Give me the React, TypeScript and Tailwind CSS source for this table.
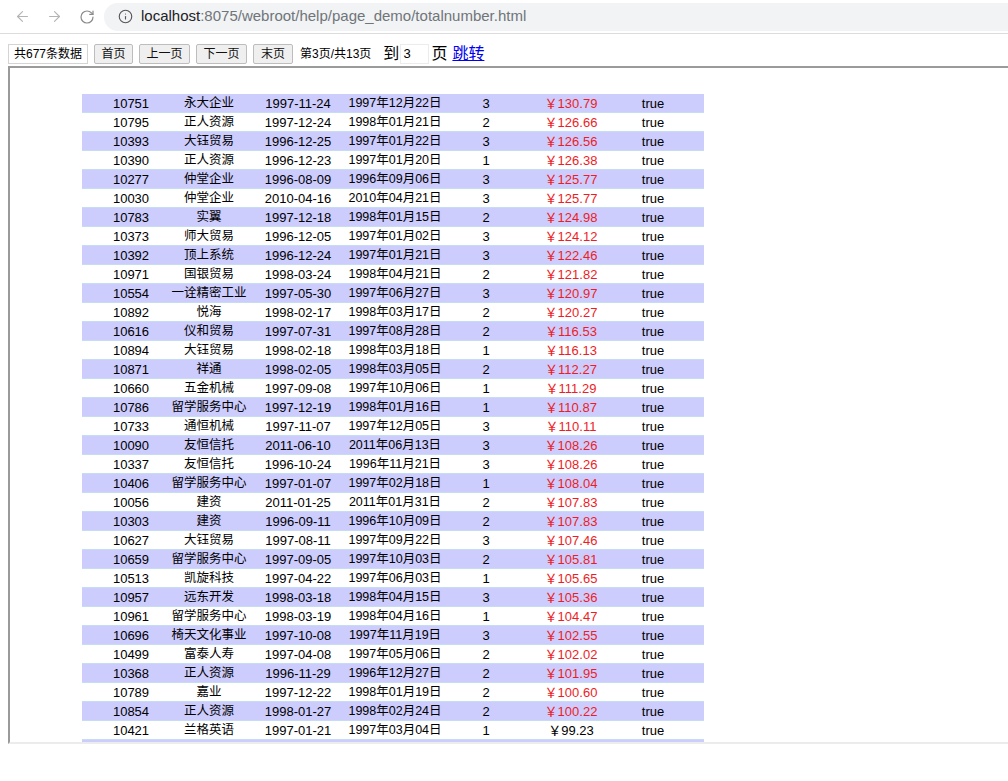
import React from 'react';
import { ArrowLeft, ArrowRight, RotateCw, Info } from 'lucide-react';

type Row = [string, string, string, string, string, string];

const rows: Row[] = [
  ['10751', '永大企业', '1997-11-24', '1997年12月22日', '3', '130.79'],
  ['10795', '正人资源', '1997-12-24', '1998年01月21日', '2', '126.66'],
  ['10393', '大钰贸易', '1996-12-25', '1997年01月22日', '3', '126.56'],
  ['10390', '正人资源', '1996-12-23', '1997年01月20日', '1', '126.38'],
  ['10277', '仲堂企业', '1996-08-09', '1996年09月06日', '3', '125.77'],
  ['10030', '仲堂企业', '2010-04-16', '2010年04月21日', '3', '125.77'],
  ['10783', '实翼', '1997-12-18', '1998年01月15日', '2', '124.98'],
  ['10373', '师大贸易', '1996-12-05', '1997年01月02日', '3', '124.12'],
  ['10392', '顶上系统', '1996-12-24', '1997年01月21日', '3', '122.46'],
  ['10971', '国银贸易', '1998-03-24', '1998年04月21日', '2', '121.82'],
  ['10554', '一诠精密工业', '1997-05-30', '1997年06月27日', '3', '120.97'],
  ['10892', '悦海', '1998-02-17', '1998年03月17日', '2', '120.27'],
  ['10616', '仪和贸易', '1997-07-31', '1997年08月28日', '2', '116.53'],
  ['10894', '大钰贸易', '1998-02-18', '1998年03月18日', '1', '116.13'],
  ['10871', '祥通', '1998-02-05', '1998年03月05日', '2', '112.27'],
  ['10660', '五金机械', '1997-09-08', '1997年10月06日', '1', '111.29'],
  ['10786', '留学服务中心', '1997-12-19', '1998年01月16日', '1', '110.87'],
  ['10733', '通恒机械', '1997-11-07', '1997年12月05日', '3', '110.11'],
  ['10090', '友恒信托', '2011-06-10', '2011年06月13日', '3', '108.26'],
  ['10337', '友恒信托', '1996-10-24', '1996年11月21日', '3', '108.26'],
  ['10406', '留学服务中心', '1997-01-07', '1997年02月18日', '1', '108.04'],
  ['10056', '建资', '2011-01-25', '2011年01月31日', '2', '107.83'],
  ['10303', '建资', '1996-09-11', '1996年10月09日', '2', '107.83'],
  ['10627', '大钰贸易', '1997-08-11', '1997年09月22日', '3', '107.46'],
  ['10659', '留学服务中心', '1997-09-05', '1997年10月03日', '2', '105.81'],
  ['10513', '凯旋科技', '1997-04-22', '1997年06月03日', '1', '105.65'],
  ['10957', '远东开发', '1998-03-18', '1998年04月15日', '3', '105.36'],
  ['10961', '留学服务中心', '1998-03-19', '1998年04月16日', '1', '104.47'],
  ['10696', '椅天文化事业', '1997-10-08', '1997年11月19日', '3', '102.55'],
  ['10499', '富泰人寿', '1997-04-08', '1997年05月06日', '2', '102.02'],
  ['10368', '正人资源', '1996-11-29', '1996年12月27日', '2', '101.95'],
  ['10789', '嘉业', '1997-12-22', '1998年01月19日', '2', '100.60'],
  ['10854', '正人资源', '1998-01-27', '1998年02月24日', '2', '100.22'],
  ['10421', '兰格英语', '1997-01-21', '1997年03月04日', '1', '99.23'],
  ['', '', '', '', '', ''],
];

const font = { fontFamily: '"Liberation Sans", "Noto Sans CJK SC", sans-serif' };

const ToolButton: React.FC<{ label: string; w: string }> = ({ label, w }) => (
  <button className={`h-[20px] ${w} bg-[#efefef] border border-[#bdbdbd] text-[12px] text-[#111] leading-none rounded-[2px]`}>
    {label}
  </button>
);

export default function App() {
  return (
    <div className="w-[1008px] h-[781px] overflow-hidden bg-white text-black" style={font}>
      {/* browser chrome */}
      <div className="h-[34px] flex items-center border-b border-[#dcdcdc] bg-white">
        <div className="flex items-center gap-[15px] pl-[14px] text-[#b4b4b4]">
          <ArrowLeft size={17} strokeWidth={1.6} />
          <ArrowRight size={17} strokeWidth={1.6} />
          <RotateCw size={16} strokeWidth={1.8} className="text-[#8a8a8a] ml-[1px]" />
        </div>
        <div className="ml-[9px] flex-1 h-[28px] rounded-l-full bg-[#f1f3f4] flex items-center pl-[14px]">
          <Info size={15} strokeWidth={1.8} className="text-[#555]" />
          <span className="ml-[8px] text-[15px] text-[#202124]">localhost</span>
          <span className="text-[15px] text-[#70757a]">:8075/webroot/help/page_demo/totalnumber.html</span>
        </div>
      </div>

      {/* paging toolbar */}
      <div className="pl-[8px] pt-[10px] flex items-center h-[30px]">
        <div className="h-[20px] w-[80px] flex items-center justify-center border border-[#d4d4d4] text-[12px]">
          共677条数据
        </div>
        <div className="ml-[6px] flex items-center gap-[6px]">
          <ToolButton label="首页" w="w-[39px]" />
          <ToolButton label="上一页" w="w-[51px]" />
          <ToolButton label="下一页" w="w-[51px]" />
          <ToolButton label="末页" w="w-[40px]" />
        </div>
        <span className="ml-[7px] text-[12px]">第3页/共13页</span>
        <span className="ml-[12px] text-[16px]">到</span>
        <div className="ml-[1px] h-[20px] w-[29px] flex items-center pl-[2px] text-[13px] border border-[#ececec]">3</div>
        <span className="ml-[2px] text-[16px]">页</span>
        <a className="ml-[5px] text-[16px] text-[#0000ee] underline" href="#">跳转</a>
      </div>

      {/* iframe */}
      <div className="ml-[8px] mt-[2px] w-[1012px] h-[678px] border-2 border-t-[#9a9a9a] border-l-[#9a9a9a] border-b-[#ececec] border-r-[#ececec] overflow-hidden">
        <div className="pl-[72px] pt-[26px]">
          <div className="w-[622px]">
            {rows.map((r, i) => {
              const price = parseFloat(r[5]);
              return (
                <div
                  key={i}
                  className={`grid grid-cols-[98px_58px_120px_74px_108px_62px_102px] h-[19px] items-center text-[13px] border-b border-[#c6dcf3] ${
                    i % 2 === 0 ? 'bg-[#ccccfd]' : 'bg-white'
                  }`}
                >
                  <div className="text-center whitespace-nowrap">{r[0]}</div>
                  <div className="text-center whitespace-nowrap flex justify-center text-[12.5px]">{r[1]}</div>
                  <div className="text-center whitespace-nowrap">{r[2]}</div>
                  <div className="text-center whitespace-nowrap flex justify-center text-[12.5px]">{r[3]}</div>
                  <div className="text-center whitespace-nowrap">{r[4]}</div>
                  <div className={`text-center whitespace-nowrap ${price >= 100 ? 'text-[#ee1c25]' : 'text-black'}`}>
                    {r[5] ? `￥${r[5]}` : ''}
                  </div>
                  <div className="text-center whitespace-nowrap">{r[5] ? 'true' : ''}</div>
                </div>
              );
            })}
          </div>
        </div>
      </div>
    </div>
  );
}
